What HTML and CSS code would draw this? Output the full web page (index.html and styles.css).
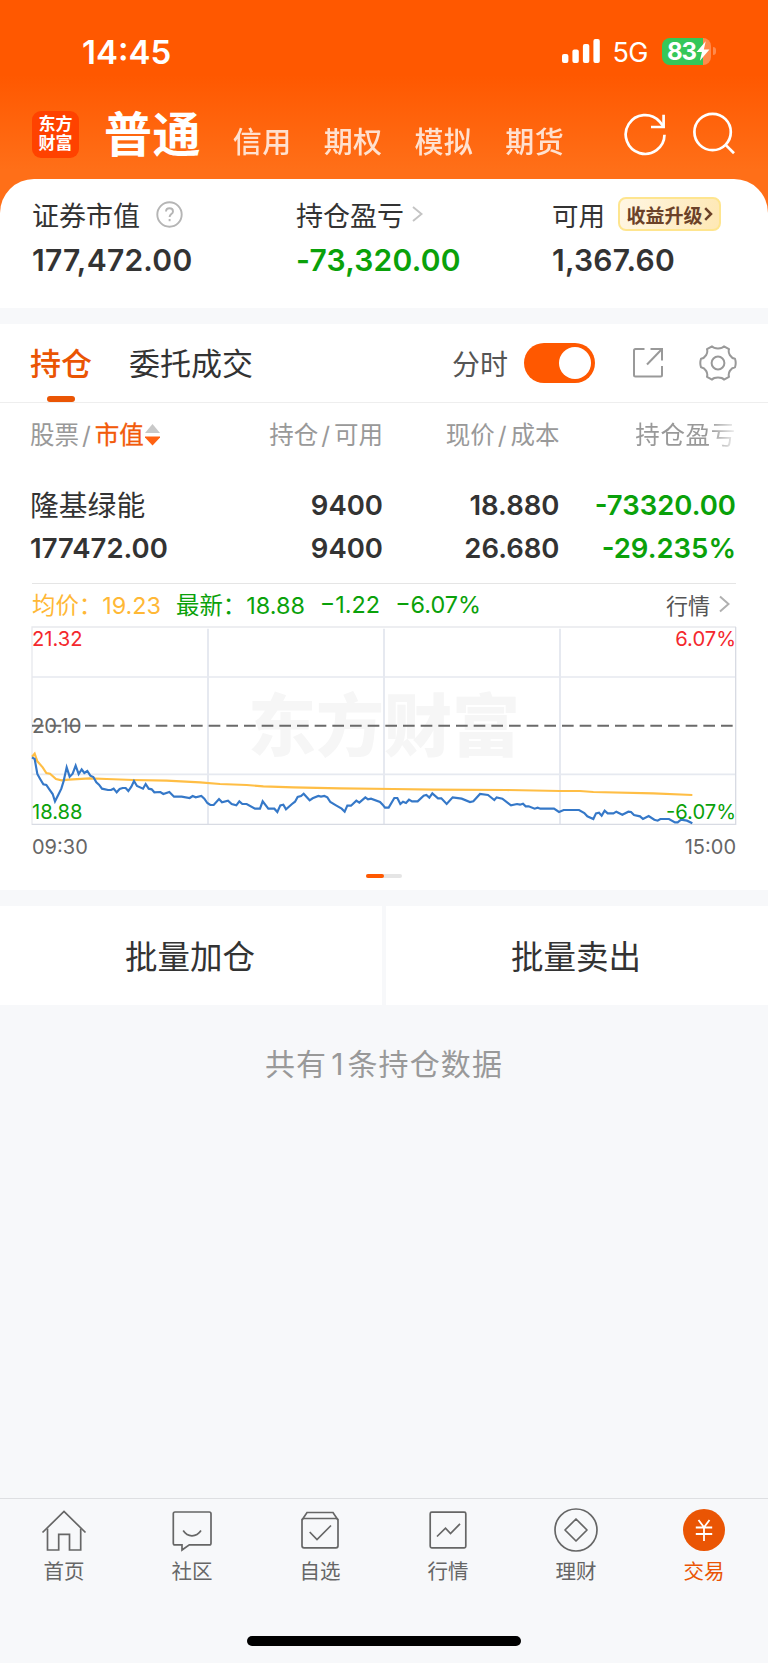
FILE: index.html
```
<!DOCTYPE html>
<html lang="zh-CN">
<head>
  <meta charset="UTF-8" />
  <meta name="viewport" content="width=device-width, initial-scale=1.0" />
  <title>东方财富 - 交易</title>
  <link rel="stylesheet" href="styles.css">
</head>
<body>

  <header class="header">
    <div class="status-bar">
      <span class="clock">14:45</span>
      <div class="status-right">
        <svg class="signal" width="38" height="24" viewBox="0 0 38 24" fill="#fff">
          <rect x="0" y="15" width="6.4" height="9" rx="2" />
          <rect x="10.4" y="10.5" width="6.4" height="13.5" rx="2" />
          <rect x="20.9" y="5" width="6.4" height="19" rx="2" />
          <rect x="31.4" y="0" width="6.4" height="24" rx="2" />
        </svg>
        <span class="network">5G</span>
        <div class="battery">
          <span class="battery-num">83</span>
          <svg width="14" height="20" viewBox="0 0 13 18" fill="#fff"><path d="M9 0 L0.5 10 H5.5 L3.6 18 L12.5 7.5 H7.3 Z" /></svg>
        </div>
        <span class="battery-cap"></span>
      </div>
    </div>
    <nav class="account-nav">
      <div class="logo"><span>东方</span><span>财富</span></div>
      <span class="account active">普通</span>
      <span class="account">信用</span>
      <span class="account">期权</span>
      <span class="account">模拟</span>
      <span class="account">期货</span>
      <svg class="icon-refresh" width="44" height="44" viewBox="0 0 44 44" fill="none" stroke="#fff" stroke-width="2.7">
        <path d="M41.5 22.8 A19.4 19.4 0 1 1 36.5 9.5 L40 13.8" />
        <path d="M40.6 2.8 V15 H28" />
      </svg>
      <svg class="icon-search" width="44" height="44" viewBox="0 0 44 44" fill="none" stroke="#fff" stroke-width="2.7">
        <circle cx="20.6" cy="20" r="18.2" />
        <path d="M33.4 32.6 L42 41.2" />
      </svg>
    </nav>
  </header>

  <section class="summary">
    <div class="summary-item">
      <div class="summary-label">
        <span>证券市值</span>
        <svg class="help" width="27" height="27" viewBox="0 0 27 27" fill="none" stroke="#b5b5b5" stroke-width="1.9">
          <circle cx="13.5" cy="13.5" r="12.2" />
          <path d="M10 10.6 C10 8.3 11.6 7.2 13.5 7.2 C15.5 7.2 17 8.5 17 10.4 C17 13 13.6 13.2 13.6 16" />
          <path d="M13.6 18 V20.2" />
        </svg>
      </div>
      <div class="summary-num">177,472.00</div>
    </div>
    <div class="summary-item">
      <div class="summary-label">
        <span>持仓盈亏</span>
        <svg class="more" width="11" height="16" viewBox="0 0 11 16" fill="none" stroke="#c4c4c4" stroke-width="1.9"><path d="M1 1 L9.5 8 L1 15" /></svg>
      </div>
      <div class="summary-num green">-73,320.00</div>
    </div>
    <div class="summary-item">
      <div class="summary-label">
        <span class="usable">可用</span>
        <span class="badge">收益升级<svg width="9" height="14" viewBox="0 0 9 14" fill="none" stroke="#6b4128" stroke-width="2.5"><path d="M1.2 1.2 L7 7 L1.2 12.8" /></svg></span>
      </div>
      <div class="summary-num">1,367.60</div>
    </div>
  </section>

  <section class="holdings">
    <div class="tabs">
      <span class="tab active">持仓</span>
      <span class="tab">委托成交</span>
      <div class="tools">
        <span class="tool-label">分时</span>
        <span class="switch"></span>
        <svg class="icon-share" width="32" height="32" viewBox="0 0 32 32" fill="none" stroke="#999" stroke-width="2">
          <path d="M12.5 2 H3.5 Q2 2 2 3.5 V28 Q2 29.5 3.5 29.5 H28.5 Q30 29.5 30 28 V19" />
          <path d="M18.5 2 H30 V13.5" />
          <path d="M15 17.5 L29.5 2.5" />
        </svg>
        <svg class="icon-gear" width="38" height="38" viewBox="0 0 38 38" fill="none" stroke="#999" stroke-width="2">
          <path d="M13 2.4 C15.2 5.1 22.8 5.1 25 2.4 L30 5.2 C28.8 9 31.5 14 36 14.7 C36.9 17.4 36.9 20.6 36 23.3 C31.5 24 28.8 29 30 32.8 L25 35.6 C22.8 32.9 15.2 32.9 13 35.6 L8 32.8 C9.2 29 6.5 24 2 23.3 C1.1 20.6 1.1 17.4 2 14.7 C6.5 14 9.2 9 8 5.2 Z" stroke-linejoin="round" />
          <circle cx="19" cy="19" r="6.4" />
        </svg>
      </div>
    </div>

    <div class="grid table-head">
      <span>股票<i>/</i><b>市值</b><svg class="sort" width="15" height="22" viewBox="0 0 15 22"><path d="M7.5 0 L15 9 H0 Z" fill="#c8c8c8" /><path d="M0 12.5 H15 V13.5 L7.5 21.5 L0 13.5 Z" fill="#ff6212" /></svg></span>
      <span>持仓<i>/</i>可用</span>
      <span>现价<i>/</i>成本</span>
      <span class="faded">持仓盈亏</span>
    </div>

    <div class="grid table-row">
      <span class="stock-name">隆基绿能</span>
      <span>9400</span>
      <span>18.880</span>
      <span class="green">-73320.00</span>
      <span>177472.00</span>
      <span>9400</span>
      <span>26.680</span>
      <span class="green">-29.235%</span>
    </div>

    <div class="quote">
      <div class="quote-line">
        <span class="avg">均价：<em>19.23</em></span>
        <span class="last">最新：<em>18.88</em></span>
        <span class="last diff">−1.22</span>
        <span class="last">−6.07%</span>
        <span class="quote-link">行情<svg width="11" height="18" viewBox="0 0 11 18" fill="none" stroke="#b0b0b0" stroke-width="2"><path d="M1 1.5 L9.5 9 L1 16.5" /></svg></span>
      </div>
      <div class="chart">
        <span class="watermark">东方财富</span>
        <!-- 3 units per pixel -->
        <svg class="plot" width="704" height="198" viewBox="96 171 2112 594" fill="none">
          <g stroke="#e6e9f0" stroke-width="6">
            <path d="M96 321 H2208 M96 613 H2208" stroke-width="5" />
            <path d="M624 176 V762 M1152 176 V762 M1680 176 V762" />
            <path d="M96 765 V171 H2208" stroke="#e8e9ed" stroke-width="4" />
            <path d="M2207 171 V763 H96" stroke="#d8dbe3" stroke-width="4" />
          </g>
          <path d="M96 467 H2208" stroke="#6a6a6a" stroke-width="6" stroke-dasharray="35 18" />
          <polyline stroke="#ffbe45" stroke-width="6.5" points="96,560 104,551 112,574 128,592 139,609 150,611 168,627 185,631 205,629 270,625 320,627 400,630 500,632 600,637 660,642 740,645 790,649 880,652 1020,655 1180,657 1300,659 1520,660 1680,663 1740,663 1780,666 1960,670 2077,675" />
          <polyline stroke="#3578c8" stroke-width="6.5" points="96,562 104,567 112,612 120,626 130,643 139,645 148,658 158,672 165,694 175,674 184,656 191,633 200,592 209,620 218,611 227,587 236,612 245,598 253,609 262,603 271,617 280,621 289,637 297,644 306,656 324,660 333,660 341,656 350,667 359,657 368,654 377,654 385,663 394,650 402,633 411,648 429,656 437,642 446,656 455,658 463,667 481,666 490,672 508,666 522,680 545,680 569,684 578,678 587,682 604,678 613,686 622,699 631,705 641,705 657,687 666,697 684,692 695,702 709,706 718,694 727,702 740,702 765,716 780,716 788,694 805,716 823,716 832,726 841,706 850,704 858,718 876,702 885,695 893,681 903,678 911,671 929,691 938,685 955,678 963,680 973,678 982,682 991,696 1008,706 1025,716 1034,725 1042,707 1053,707 1069,692 1078,698 1096,682 1104,688 1113,686 1140,696 1148,704 1155,713 1166,713 1183,684 1192,684 1201,702 1209,695 1218,699 1227,689 1236,694 1253,694 1271,677 1279,675 1288,683 1297,670 1314,685 1324,685 1340,702 1358,682 1385,686 1410,696 1420,694 1440,672 1464,675 1483,690 1490,682 1507,686 1533,706 1551,702 1560,704 1569,701 1577,709 1586,709 1604,716 1613,713 1621,716 1662,716 1677,726 1691,720 1737,720 1753,729 1762,739 1780,747 1788,730 1797,728 1805,737 1814,722 1823,730 1840,730 1849,725 1867,734 1885,725 1893,726 1902,735 1920,739 1929,747 1946,738 1963,749 1973,752 1981,747 2007,747 2025,757 2033,757 2043,749 2061,752 2077,760" />
        </svg>
        <span class="tick top-left red">21.32</span>
        <span class="tick top-right red">6.07%</span>
        <span class="tick mid-left">20.10</span>
        <span class="tick bottom-left green">18.88</span>
        <span class="tick bottom-right green">-6.07%</span>
      </div>
      <div class="chart-times"><span>09:30</span><span>15:00</span></div>
      <div class="pager"><span></span></div>
    </div>
  </section>

  <div class="actions">
    <button class="action">批量加仓</button>
    <button class="action">批量卖出</button>
  </div>

  <p class="total">共有<span>1</span>条持仓数据</p>

  <footer class="tabbar">
    <div class="tabbar-items">
      <a class="tabbar-item">
        <svg width="46" height="46" viewBox="0 0 46 46" fill="none" stroke="#666" stroke-width="1.7">
          <path d="M1.5 24.5 L23 3.5 L44.5 24.5" />
          <path d="M6.5 20.5 V42 H17.7 V26.3 H28.5 V42 H39.7 V20.5" />
        </svg>
        <span>首页</span>
      </a>
      <a class="tabbar-item">
        <svg width="46" height="46" viewBox="0 0 46 46" fill="none" stroke="#666" stroke-width="1.7">
          <path d="M6 4 H40.3 Q42 4 42 5.7 V35.2 Q42 36.9 40.3 36.9 H20.3 L13 42 V36.9 H6 Q4.3 36.9 4.3 35.2 V5.7 Q4.3 4 6 4 Z" />
          <path d="M14.2 22.5 Q17.5 27.8 23 27.8 Q28.5 27.8 32 22.5" />
        </svg>
        <span>社区</span>
      </a>
      <a class="tabbar-item">
        <svg width="46" height="46" viewBox="0 0 46 46" fill="none" stroke="#666" stroke-width="1.7">
          <rect x="5" y="10.5" width="36" height="29.3" rx="2" />
          <path d="M5 12 L10 4.5 H36 L41 12" />
          <path d="M12.7 24 L20 31.5 L34 17.5" />
        </svg>
        <span>自选</span>
      </a>
      <a class="tabbar-item">
        <svg width="46" height="46" viewBox="0 0 46 46" fill="none" stroke="#666" stroke-width="1.7">
          <rect x="5.2" y="4.2" width="35.6" height="35.6" rx="1.5" />
          <path d="M12 28.5 L20.5 20.2 L25.5 25.5 L35 15.8" />
        </svg>
        <span>行情</span>
      </a>
      <a class="tabbar-item">
        <svg width="46" height="46" viewBox="0 0 46 46" fill="none" stroke="#666" stroke-width="1.7">
          <circle cx="23" cy="22" r="21" />
          <path d="M23 11 L34 22 L23 33 L12 22 Z" stroke-linejoin="round" />
        </svg>
        <span>理财</span>
      </a>
      <a class="tabbar-item active">
        <svg width="46" height="46" viewBox="0 0 46 46" fill="none" stroke="#fff" stroke-width="1.8">
          <circle cx="23" cy="22" r="21" fill="#ea5504" stroke="none" />
          <path d="M17.5 12 L23 19.3 L28.5 12 M23 19.3 V33 M14.8 19.5 H31.2 M14.8 26 H31.2" />
        </svg>
        <span>交易</span>
      </a>
    </div>
    <div class="home-bar"></div>
  </footer>

</body>
</html>
```
FILE: styles.css
```
* {
  box-sizing: border-box;
}

body {
  margin: 0;
  width: 768px;
  height: 1663px;
  display: flex;
  flex-direction: column;
  overflow: hidden;
  background: #f7f8fa;
  color: #333;
  font-family: Inter, "Noto Sans CJK SC", sans-serif;
  white-space: nowrap;
}

.green {
  color: #0aa10a;
}

.red {
  color: #f4282d;
}

/* header */
.header {
  height: 215px;
  flex: none;
  background: linear-gradient(#ff5800 0, #ff5800 75px, #ff6f18 170px);
  color: #fff;
}

.status-bar {
  height: 102px;
  padding: 0 52px 0 82px;
  display: flex;
  justify-content: space-between;
  align-items: center;
}

.clock {
  margin-top: 1px;
  font-size: 33px;
  font-weight: 600;
  letter-spacing: 0;
}

.status-right {
  display: flex;
  align-items: center;
}

.network {
  margin: 2px 14px 0 12px;
  font-size: 27px;
  letter-spacing: -0.5px;
}

.battery {
  width: 49px;
  height: 27px;
  padding-left: 5px;
  display: flex;
  align-items: center;
  border-radius: 8px;
  background: linear-gradient(90deg, #34c759 41px, #ff8a4c 41px);
}

.battery-num {
  font-size: 24px;
  font-weight: 700;
  letter-spacing: -1.2px;
}

.battery-cap {
  width: 3px;
  height: 8px;
  margin-left: 2px;
  border-radius: 0 3px 3px 0;
  background: #ff8a4c;
}

.account-nav {
  height: 64px;
  padding-left: 32px;
  display: flex;
  align-items: center;
}

.logo {
  width: 47px;
  height: 47px;
  margin-right: 25px;
  display: flex;
  flex-direction: column;
  align-items: center;
  justify-content: center;
  border-radius: 9px;
  background: #ff4200;
  font-size: 17px;
  font-weight: 700;
  line-height: 19px;
}

.account {
  margin: 17px 32px 0 0;
  font-size: 29px;
  font-weight: 500;
  line-height: 40px;
  letter-spacing: 0.4px;
  opacity: 0.8;
}

.account.active {
  margin: 1px 32px 0 0;
  font-size: 48px;
  font-weight: 700;
  line-height: 64px;
  opacity: 1;
}

.icon-refresh {
  margin-left: 27px;
}

.icon-search {
  margin-left: 25px;
}

/* summary */
.summary {
  height: 129px;
  margin-top: -36px;
  padding: 16px 0 0 32px;
  flex: none;
  display: grid;
  grid-template-columns: 264px 256px 1fr;
  border-radius: 34px 34px 0 0;
  background: #fff;
}

.summary-label {
  height: 38px;
  display: flex;
  align-items: center;
  font-size: 27px;
}

.help {
  margin-left: 16px;
}

.more {
  margin-left: 8px;
}

.usable {
  font-size: 26.5px;
}

.badge {
  width: 103px;
  height: 34px;
  margin-left: 13px;
  display: flex;
  align-items: center;
  justify-content: center;
  gap: 1px;
  border: 2px solid #fee58f;
  border-radius: 8px;
  background: linear-gradient(100deg, #fff6e3, #fee8b5);
  color: #6b4128;
  font-size: 19px;
  font-weight: 700;
}

.summary-num {
  margin-top: 7px;
  font-size: 30px;
  font-weight: 600;
  line-height: 40px;
  letter-spacing: 0.25px;
}

/* holdings */
.holdings {
  height: 566px;
  margin-top: 16px;
  flex: none;
  background: #fff;
}

.tabs {
  height: 79px;
  padding: 0 33px 0 30px;
  display: flex;
  align-items: center;
  border-bottom: 1px solid #eee;
}

.tab {
  height: 78px;
  margin-right: 37px;
  position: relative;
  font-size: 31px;
  line-height: 79px;
}

.tab.active {
  color: #ea5504;
  font-weight: 500;
}

.tab.active::after {
  content: "";
  position: absolute;
  left: 17px;
  bottom: 0;
  width: 28px;
  height: 6px;
  border-radius: 3px;
  background: #ea5504;
}

.tools {
  margin-left: auto;
  display: flex;
  align-items: center;
}

.tool-label {
  font-size: 28px;
  color: #555;
}

.switch {
  width: 71px;
  height: 40px;
  margin: 0 37px 0 16px;
  padding: 4px;
  display: flex;
  justify-content: flex-end;
  border-radius: 20px;
  background: #ff5800;
}

.switch::after {
  content: "";
  width: 32px;
  height: 32px;
  border-radius: 50%;
  background: #fff;
}

.icon-gear {
  margin: 0 -2px 0 35px;
}

.grid {
  padding: 0 32px 0 30px;
  display: grid;
  grid-template-columns: repeat(4, 1fr);
  text-align: right;
}

.grid > :nth-child(4n + 1) {
  text-align: left;
}

.table-head {
  height: 64px;
  line-height: 64px;
  font-size: 24.5px;
  color: #999;
}

.table-head i {
  margin: 0 4px 0 3px;
  font-style: normal;
}

.table-head b {
  font-weight: 400;
  color: #f25a0a;
  -webkit-text-stroke: 0.3px #f25a0a;
}

.sort {
  margin-left: 1px;
  vertical-align: -2px;
}

.faded {
  letter-spacing: 0.7px;
  -webkit-mask-image: linear-gradient(90deg, #000 150px, transparent 180px);
  mask-image: linear-gradient(90deg, #000 150px, transparent 180px);
}

.table-row {
  height: 116px;
  padding-top: 17px;
  grid-auto-rows: 43px;
  line-height: 43px;
  font-size: 27.5px;
  font-weight: 600;
}

.stock-name {
  font-size: 28.8px;
  font-weight: 400;
}

.quote {
  margin: 0 32px;
  border-top: 1px solid #e5e5e5;
}

.quote-line {
  height: 43px;
  padding-bottom: 3px;
  display: flex;
  align-items: center;
  font-size: 23.4px;
}

.quote-line em {
  font-style: normal;
}

.avg {
  margin-right: 15px;
  color: #ffb836;
}

.last {
  margin-right: 15px;
  color: #0aa10a;
}

.quote-link {
  margin-left: auto;
  padding-right: 6px;
  display: flex;
  align-items: center;
  gap: 9px;
  font-size: 22px;
  color: #555;
}

.chart {
  height: 198px;
  position: relative;
}

.plot {
  display: block;
  position: relative;
  overflow: visible;
}

.watermark {
  position: absolute;
  top: 51px;
  left: 216px;
  font-size: 68px;
  font-weight: 900;
  line-height: 96px;
  color: #f6f6f6;
}

.tick {
  position: absolute;
  font-size: 20.2px;
  line-height: 24px;
}

.top-left {
  top: 0;
  left: 0;
}

.top-right {
  top: 0;
  right: 0;
}

.mid-left {
  top: 87px;
  left: 0;
  color: #666;
}

.bottom-left {
  bottom: 1px;
  left: 0;
}

.bottom-right {
  bottom: 1px;
  right: 0;
}

.chart-times {
  height: 44px;
  display: flex;
  justify-content: space-between;
  font-size: 20px;
  line-height: 45px;
  color: #666;
}

.pager {
  width: 36px;
  height: 4px;
  margin: 5px auto 0;
  border-radius: 2px;
  background: #e5e5e5;
}

.pager span {
  display: block;
  width: 18px;
  height: 4px;
  border-radius: 2px;
  background: #ff5800;
}

/* batch buttons */
.actions {
  height: 99px;
  margin-top: 16px;
  flex: none;
  display: flex;
  gap: 4px;
}

.action {
  flex: 1;
  padding: 0 2px 2px 0;
  border: none;
  background: #fff;
  color: #333;
  font-family: inherit;
  font-size: 32.5px;
}

.total {
  margin: 36px 0 0;
  font-size: 30px;
  line-height: 46px;
  letter-spacing: 1.1px;
  text-align: center;
  color: #999;
}

.total span {
  margin: 0 3px 0 4px;
}

/* bottom navigation */
.tabbar {
  height: 165px;
  margin-top: auto;
  flex: none;
  border-top: 1px solid #dedfe2;
}

.tabbar-items {
  height: 137px;
  padding-top: 9px;
  display: grid;
  grid-template-columns: repeat(6, 1fr);
}

.tabbar-item {
  display: flex;
  flex-direction: column;
  align-items: center;
  font-size: 20.5px;
  line-height: 32px;
  color: #666;
}

.tabbar-item span {
  margin-top: 2px;
}

.tabbar-item.active {
  color: #ea5504;
}

.home-bar {
  width: 274px;
  height: 10px;
  margin: 0 auto;
  border-radius: 5px;
  background: #000;
}
```
